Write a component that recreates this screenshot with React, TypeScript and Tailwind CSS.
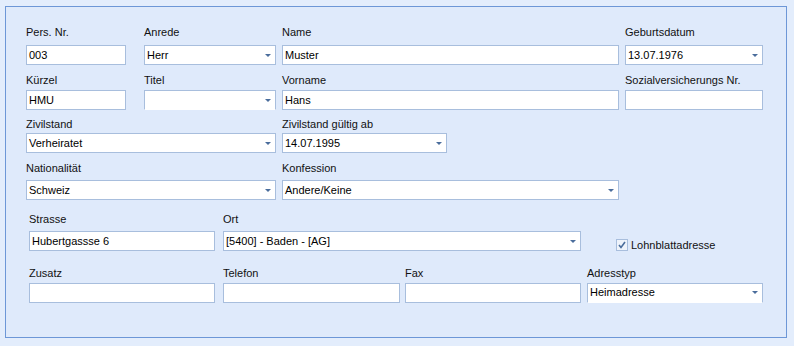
import React from 'react';

const font = { fontFamily: '"Liberation Sans", Arial, sans-serif' };

function Arrow() {
  return (
    <svg width="6" height="3" viewBox="0 0 6 3" className="shrink-0">
      <path d="M0 0h6L3 3z" fill="#4a6d9c" />
    </svg>
  );
}

function Field({ label, value = '', combo = false, w, openBottom = false }: { label: string; value?: string; combo?: boolean; w: string; openBottom?: boolean }) {
  return (
    <div className={`flex flex-col ${w}`}>
      <div className="h-[13px] text-[11px] leading-[13px] text-[#111] whitespace-nowrap">{label}</div>
      <Box value={value} combo={combo} openBottom={openBottom} />
    </div>
  );
}

function Box({ value, combo, openBottom }: { value: string; combo: boolean; openBottom: boolean }) {
  return (
    <div
      className={`field-box flex items-center h-[20px] bg-white border border-[#a8bedd] pl-[2px] pr-[4px] text-[11px] text-black ${openBottom ? 'border-b-white' : ''}`}
    >
      <span className="flex-1 whitespace-nowrap">{value}</span>
      {combo && <Arrow />}
    </div>
  );
}

export default function App() {
  return (
    <div className="w-[794px] h-[346px] bg-[#e3edfc] pt-[6px] pl-[5px]" style={font}>
      <div className="w-[782px] h-[332px] border border-[#6d97d7] bg-[#dfeafb] flex flex-col">
        {/* Row 1 */}
        <div className="flex pl-[20px] mt-[19px] [&_.field-box]:mt-[6px]">
          <Field label="Pers. Nr." value="003" w="w-[100px]" />
          <div className="ml-[18px]"><Field label="Anrede" value="Herr" combo w="w-[132px]" /></div>
          <div className="ml-[6px]"><Field label="Name" value="Muster" w="w-[337px]" /></div>
          <div className="ml-[6px]"><Field label="Geburtsdatum" value="13.07.1976" combo w="w-[138px]" /></div>
        </div>
        {/* Row 2 */}
        <div className="flex pl-[20px] mt-[9px] [&_.field-box]:mt-[3px]">
          <Field label="Kürzel" value="HMU" w="w-[100px]" />
          <div className="ml-[18px]"><Field label="Titel" combo openBottom w="w-[132px]" /></div>
          <div className="ml-[6px]"><Field label="Vorname" value="Hans" w="w-[337px]" /></div>
          <div className="ml-[6px]"><Field label="Sozialversicherungs Nr." w="w-[138px]" /></div>
        </div>
        {/* Row 3 */}
        <div className="flex pl-[20px] mt-[8px] [&_.field-box]:mt-[2px]">
          <Field label="Zivilstand" value="Verheiratet" combo w="w-[250px]" />
          <div className="ml-[6px]"><Field label="Zivilstand gültig ab" value="14.07.1995" combo w="w-[165px]" /></div>
        </div>
        {/* Row 4 */}
        <div className="flex pl-[20px] mt-[9px] [&_.field-box]:mt-[5px]">
          <Field label="Nationalität" value="Schweiz" combo w="w-[250px]" />
          <div className="ml-[6px]"><Field label="Konfession" value="Andere/Keine" combo w="w-[337px]" /></div>
        </div>
        {/* Row 5 */}
        <div className="flex items-start pl-[23px] mt-[13px] [&_.field-box]:mt-[5px]">
          <Field label="Strasse" value="Hubertgassse 6" w="w-[186px]" />
          <div className="ml-[8px]"><Field label="Ort" value="[5400] - Baden - [AG]" combo w="w-[358px]" /></div>
          <div className="ml-[35px] mt-[24px] flex items-center">
            <div className="w-[12px] h-[12px] border border-[#a8bedd] bg-[#eef3fb] flex items-center justify-center">
              <svg width="8" height="8" viewBox="0 0 8 8">
                <path d="M1 4l2 2.5L7 1" stroke="#4a6d9c" strokeWidth="1.6" fill="none" />
              </svg>
            </div>
            <span className="ml-[3px] text-[11px] text-[#111] whitespace-nowrap">Lohnblattadresse</span>
          </div>
        </div>
        {/* Row 6 */}
        <div className="flex pl-[23px] mt-[13px] [&_.field-box]:mt-[3px]">
          <Field label="Zusatz" w="w-[186px]" />
          <div className="ml-[8px]"><Field label="Telefon" w="w-[177px]" /></div>
          <div className="ml-[5px]"><Field label="Fax" w="w-[176px]" /></div>
          <div className="ml-[6px]"><Field label="Adresstyp" value="Heimadresse" combo openBottom w="w-[176px]" /></div>
        </div>
      </div>
    </div>
  );
}
